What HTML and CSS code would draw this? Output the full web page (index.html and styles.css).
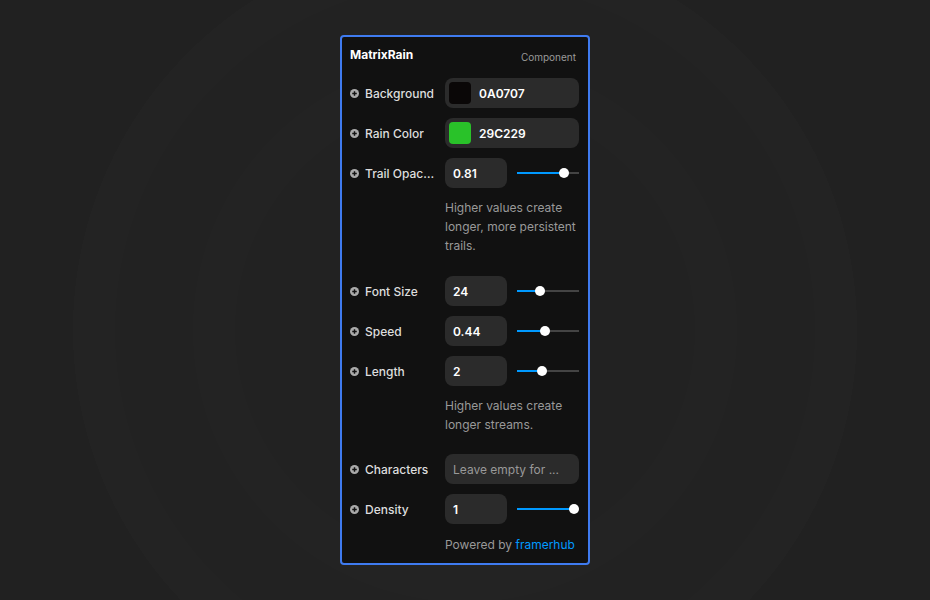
FILE: index.html
```
<!DOCTYPE html>
<html>
<head>
<link rel="stylesheet" href="styles.css">
</head>
<body>
<div class="stage">
  <div class="panel">
    <div class="panel-head">
      <span class="title">MatrixRain</span>
      <span class="kind">Component</span>
    </div>

    <div class="row">
      <div class="label"><svg class="plus" viewBox="0 0 10 10"><circle cx="5" cy="5" r="5"/><path d="M5 2.5v5M2.5 5h5"/></svg><span>Background</span></div>
      <div class="field color"><span class="swatch" style="background:#0a0707"></span>0A0707</div>
    </div>

    <div class="row">
      <div class="label"><svg class="plus" viewBox="0 0 10 10"><circle cx="5" cy="5" r="5"/><path d="M5 2.5v5M2.5 5h5"/></svg><span>Rain Color</span></div>
      <div class="field color"><span class="swatch" style="background:#29c229"></span>29C229</div>
    </div>

    <div class="row">
      <div class="label"><svg class="plus" viewBox="0 0 10 10"><circle cx="5" cy="5" r="5"/><path d="M5 2.5v5M2.5 5h5"/></svg><span>Trail Opacity</span></div>
      <div class="control">
        <div class="field num">0.81</div>
        <div class="slider" style="--p:0.81"><i class="fill"></i><i class="knob"></i></div>
      </div>
    </div>
    <p class="desc">Higher values create longer, more persistent trails.</p>

    <div class="row">
      <div class="label"><svg class="plus" viewBox="0 0 10 10"><circle cx="5" cy="5" r="5"/><path d="M5 2.5v5M2.5 5h5"/></svg><span>Font Size</span></div>
      <div class="control">
        <div class="field num">24</div>
        <div class="slider" style="--p:0.35"><i class="fill"></i><i class="knob"></i></div>
      </div>
    </div>

    <div class="row">
      <div class="label"><svg class="plus" viewBox="0 0 10 10"><circle cx="5" cy="5" r="5"/><path d="M5 2.5v5M2.5 5h5"/></svg><span>Speed</span></div>
      <div class="control">
        <div class="field num">0.44</div>
        <div class="slider" style="--p:0.44"><i class="fill"></i><i class="knob"></i></div>
      </div>
    </div>

    <div class="row">
      <div class="label"><svg class="plus" viewBox="0 0 10 10"><circle cx="5" cy="5" r="5"/><path d="M5 2.5v5M2.5 5h5"/></svg><span>Length</span></div>
      <div class="control">
        <div class="field num">2</div>
        <div class="slider" style="--p:0.38"><i class="fill"></i><i class="knob"></i></div>
      </div>
    </div>
    <p class="desc short">Higher values create longer streams.</p>

    <div class="row">
      <div class="label"><svg class="plus" viewBox="0 0 10 10"><circle cx="5" cy="5" r="5"/><path d="M5 2.5v5M2.5 5h5"/></svg><span>Characters</span></div>
      <div class="field text">Leave empty for ...</div>
    </div>

    <div class="row">
      <div class="label"><svg class="plus" viewBox="0 0 10 10"><circle cx="5" cy="5" r="5"/><path d="M5 2.5v5M2.5 5h5"/></svg><span>Density</span></div>
      <div class="control">
        <div class="field num">1</div>
        <div class="slider" style="--p:1"><i class="fill"></i><i class="knob"></i></div>
      </div>
    </div>

    <p class="footer">Powered by <a>framerhub</a></p>
  </div>
</div>
</body>
</html>
```

FILE: styles.css
```
body {
  margin: 0;
  background-color: #212121;
  font-family: Inter, "Noto Sans", sans-serif;
}

/* faint rings behind the panel */
.stage {
  height: 600px;
  display: flex;
  justify-content: center;
  align-items: flex-start;
  padding-top: 35px;
  box-sizing: border-box;
  background: radial-gradient(circle at 465px 330px,
    #222 0 230px, #232323 230px 272px, #222 272px 350px,
    #232323 350px 392px, #212121 392px);
}

.panel {
  width: 250px;
  box-sizing: border-box;
  border: 2px solid #3f7bf0;
  border-radius: 4px;
  background: #111;
  padding: 10px 9px 9px 8px;
  display: flex;
  flex-direction: column;
  gap: 10px;
}

.panel-head {
  display: flex;
  justify-content: space-between;
  align-items: baseline;
  line-height: 16px;
  margin-bottom: 5px;
}
.title {
  color: #fff;
  font-size: 12px;
  font-weight: 700;
}
.kind {
  color: #999;
  font-size: 10px;
  padding-right: 3px;
  position: relative;
  top: 2px;
}

.row {
  display: flex;
  height: 30px;
  align-items: center;
}

.label {
  width: 95px;
  flex: none;
  display: flex;
  align-items: center;
  gap: 6px;
  padding-right: 10px;
  box-sizing: border-box;
  color: #ddd;
  font-size: 12px;
  font-weight: 500;
}
.label span {
  white-space: nowrap;
  overflow: hidden;
  text-overflow: ellipsis;
}
.plus {
  width: 9px;
  height: 9px;
  flex: none;
}
.plus circle { fill: #aaa; }
.plus path { stroke: #111; stroke-width: 1.6; }

.field {
  height: 30px;
  box-sizing: border-box;
  background: #2b2b2b;
  border-radius: 8px;
  display: flex;
  align-items: center;
  font-size: 12px;
  font-weight: 600;
  color: #fff;
}
.field.color, .field.text {
  flex: 1;
}
.field.color {
  padding-left: 4px;
  gap: 8px;
}
.swatch {
  width: 22px;
  height: 22px;
  border-radius: 4px;
}
.field.num {
  width: 62px;
  padding-left: 8px;
}
.field.text {
  padding-left: 8px;
  font-weight: 400;
  color: #999;
}

.control {
  flex: 1;
  display: flex;
  align-items: center;
  gap: 10px;
}
.slider {
  flex: 1;
  height: 10px;
  position: relative;
}
.slider::before {
  content: "";
  position: absolute;
  left: 0;
  right: 0;
  top: 4px;
  height: 2px;
  background: #444;
}
.slider .fill {
  position: absolute;
  left: 0;
  top: 4px;
  height: 2px;
  width: calc(var(--p) * (100% - 10px) + 5px);
  background: #0099ff;
}
.slider .knob {
  position: absolute;
  top: 0;
  left: calc(var(--p) * (100% - 10px));
  width: 10px;
  height: 10px;
  border-radius: 50%;
  background: #fff;
}

.desc {
  margin: 0 0 11px 95px;
  color: #999;
  font-size: 12px;
  line-height: 19px;
}
.desc.short {
  margin-bottom: 10px;
}

.footer {
  margin: 1px 0 0 95px;
  color: #999;
  font-size: 12px;
  line-height: 19px;
}
.footer a {
  color: #0099ff;
}
```
